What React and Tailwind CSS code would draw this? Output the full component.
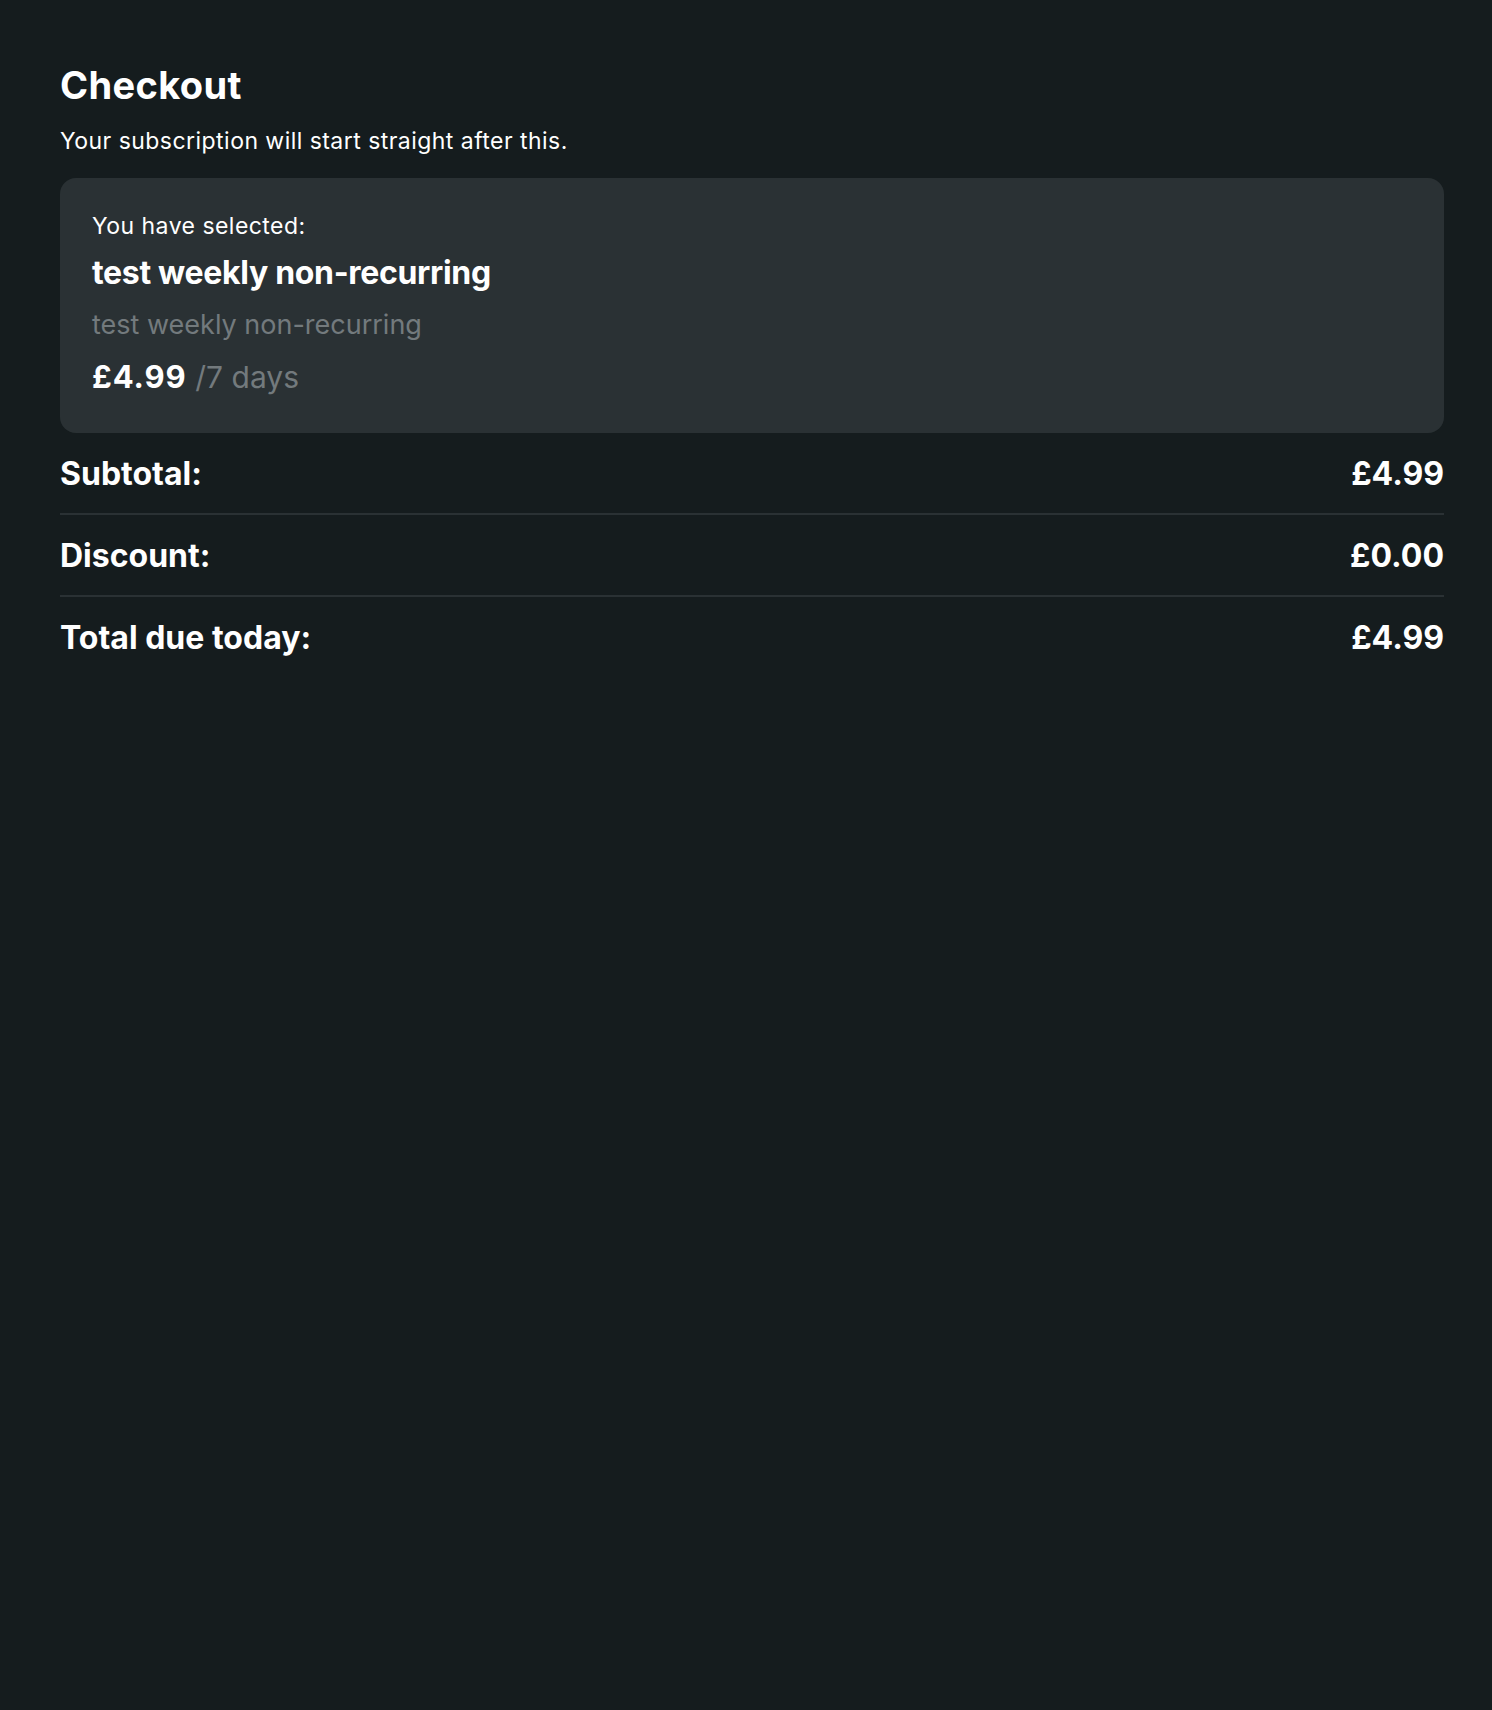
export default function App() {
  return (
    <div className="min-h-[1710px] w-full bg-[#151c1e] text-white" style={{ fontFamily: 'Inter, "Noto Sans", sans-serif' }}>
      <div className="pl-[60px] pr-[48px] pt-[63px]">
        <h1 className="text-[38px] font-bold leading-[44px] tracking-[0.01em]">Checkout</h1>
        <p className="mt-[18px] text-[23px] leading-[32px] tracking-[0.02em]">Your subscription will start straight after this.</p>
        <div className="mt-[21px] rounded-2xl bg-[#2a3134] px-[32px] pt-[32px] pb-[36px]">
          <p className="text-[23px] leading-[32px] tracking-[0.02em]">You have selected:</p>
          <p className="mt-[11px] text-[32px] font-bold leading-[40px] tracking-[-0.01em]">test weekly non-recurring</p>
          <p className="mt-[14px] text-[27px] leading-[36px] text-[#737a7d]">test weekly non-recurring</p>
          <p className="mt-[14px] text-[31px] leading-[40px]">
            <span className="font-bold tracking-[0.03em]">£4.99</span>{' '}
            <span className="text-[30px] text-[#737a7d]">/7 days</span>
          </p>
        </div>
        <div className="flex flex-col">
          <div className="flex items-center justify-between border-b-2 border-[#2a3134] pt-[21px] pb-[19px] text-[32px] font-bold leading-[40px]">
            <span>Subtotal:</span>
            <span>£4.99</span>
          </div>
          <div className="flex items-center justify-between border-b-2 border-[#2a3134] pt-[21px] pb-[19px] text-[32px] font-bold leading-[40px]">
            <span>Discount:</span>
            <span>£0.00</span>
          </div>
          <div className="flex items-center justify-between pt-[21px] pb-[19px] text-[32px] font-bold leading-[40px]">
            <span>Total due today:</span>
            <span>£4.99</span>
          </div>
        </div>
      </div>
    </div>
  );
}
